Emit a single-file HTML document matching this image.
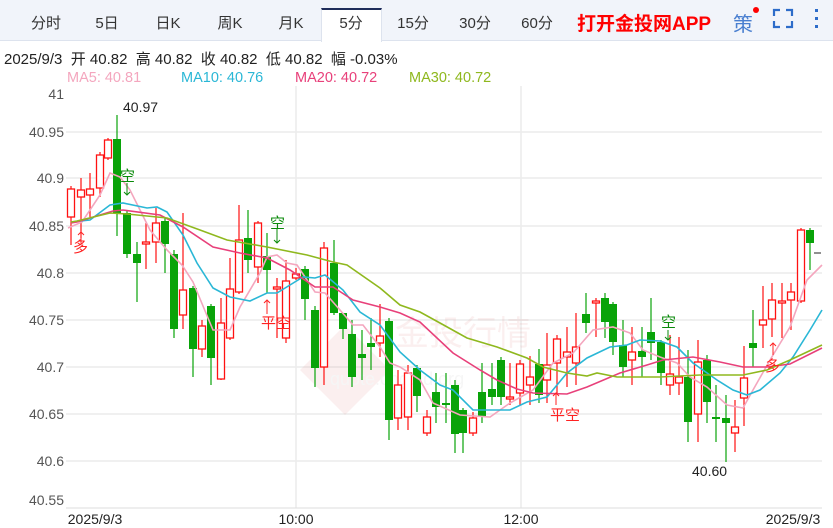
<!DOCTYPE html>
<html><head><meta charset="utf-8"><style>
*{margin:0;padding:0;box-sizing:border-box}
body{width:833px;height:528px;background:#fff;font-family:"Liberation Sans","Noto Sans CJK SC",sans-serif;position:relative;overflow:hidden}
.bar{position:absolute;left:0;top:0;width:833px;height:41px;background:#f1f4fa;border-bottom:1px solid #dde3ee}
.tab{position:absolute;top:12px;font-size:15px;color:#333;transform:translateX(-50%)}
.act{position:absolute;left:321px;top:8px;width:61px;height:34px;background:#fff;border-top:2px solid #1f2d5a;border-left:1px solid #dde3ee;border-right:1px solid #dde3ee}
.app{position:absolute;left:577px;top:9px;font-size:19px;font-weight:bold;color:#f00}
.info{position:absolute;left:4px;top:48px;font-size:15px;color:#222;white-space:pre}
svg{position:absolute;left:0;top:0}
</style></head><body>
<div class="bar"></div><div class="act"></div>
<span class="tab" style="left:46px">分时</span><span class="tab" style="left:107px">5日</span><span class="tab" style="left:168px">日K</span><span class="tab" style="left:230px">周K</span><span class="tab" style="left:291px">月K</span><span class="tab" style="left:351px">5分</span><span class="tab" style="left:413px">15分</span><span class="tab" style="left:475px">30分</span><span class="tab" style="left:537px">60分</span>
<span class="app">打开金投网APP</span>
<span style="position:absolute;left:733px;top:8px;font-size:20px;color:#4a7fd0">策</span>
<span style="position:absolute;left:753px;top:7px;width:6px;height:6px;border-radius:3px;background:#f00"></span>
<div class="info">2025/9/3  开 40.82  高 40.82  收 40.82  低 40.82  幅 -0.03%</div>
<svg width="833" height="528" id="s">
<g fill="none" stroke="#2d6cc9" stroke-width="2.2"><path d="M774 16v-6h6M786 10h6v6M792 21v6h-6M780 27h-6v-6"/></g>
<g fill="#2d6cc9"><rect x="815" y="9" width="3" height="3"/><rect x="815" y="17" width="3" height="3"/><rect x="815" y="25" width="3" height="3"/></g>
<text x="67" y="82" font-size="14.5" fill="#f4a6be">MA5: 40.81</text>
<text x="181" y="82" font-size="14.5" fill="#2ab7d6">MA10: 40.76</text>
<text x="295" y="82" font-size="14.5" fill="#e8407a">MA20: 40.72</text>
<text x="409" y="82" font-size="14.5" fill="#8fb81e">MA30: 40.72</text>
<g stroke="#ececec" stroke-width="1.5" id="grid"></g>
<g font-size="14" fill="#555" text-anchor="end" id="yl"></g>
<g opacity="0.07"><path d="M300 370l45-45 45 45-45 45z" fill="#c33"/><text x="395" y="345" font-size="34" fill="#c33">金投行情</text><text x="330" y="385" font-size="18" fill="#888">quote.cngold.org</text></g>
<g id="c"></g>
<g fill="none" stroke-width="1.6" id="ma"></g>
<g font-size="14" fill="#222"><text x="123" y="112">40.97</text><text x="692" y="476">40.60</text></g>
<g font-size="15" fill="#0a8a0a"><text x="120" y="181">空</text><text x="270" y="228">空</text><text x="661" y="327">空</text></g>
<g stroke="#0a8a0a" stroke-width="1" fill="none"><path d="M127 183v12M124 192l3 3 3-3M277 229v14M274 240l3 3 3-3M668 330v10M665 337l3 3 3-3"/></g>
<g font-size="15" fill="#f22"><text x="73" y="252">多</text><text x="765" y="371">多</text><text x="261" y="328">平空</text><text x="550" y="420">平空</text></g>
<g stroke="#f22" stroke-width="1" fill="none"><path d="M81 232v12M78 235l3-3 3 3M267 300v14M264 303l3-3 3 3M556 393v12M553 396l3-3 3 3M773 343v12M770 346l3-3 3 3"/></g>
<line x1="66" y1="508" x2="822" y2="508" stroke="#ddd"/>
<g font-size="14" fill="#222" text-anchor="middle"><text x="95" y="524">2025/9/3</text><text x="296" y="524">10:00</text><text x="521" y="524">12:00</text><text x="793" y="524">2025/9/3</text></g>
<line x1="814" y1="253" x2="821" y2="253" stroke="#222"/>
</svg>
<script>
var ns="http://www.w3.org/2000/svg";
function el(p,t,a){var e=document.createElementNS(ns,t);for(var k in a)e.setAttribute(k,a[k]);document.getElementById(p).appendChild(e);return e;}
var gl=[[132,"40.95"],[178,"40.9"],[226,"40.85"],[273,"40.8"],[320,"40.75"],[367,"40.7"],[414,"40.65"],[461,"40.6"]];
gl.forEach(function(g){el("grid","line",{x1:66,x2:822,y1:g[0],y2:g[0]});var t=el("yl","text",{x:64,y:g[0]+5});t.textContent=g[1];});
el("grid","line",{x1:296,x2:296,y1:86,y2:508});el("grid","line",{x1:521,x2:521,y1:86,y2:508});
var t=el("yl","text",{x:64,y:99});t.textContent="41";t=el("yl","text",{x:64,y:505});t.textContent="40.55";
var C=[[71,189,217,186,245,1],[81,190,197,178,238,1],[90,189,195,173,217,1],[100,155,188,152,197,1],[108,140,158,138,160,1],[117,139,213,115,236,0],[127,213,254,210,258,0],[137,254,263,242,302,0],[146,242,244,223,269,1],[156,223,242,208,263,1],[165,221,244,218,273,0],[174,254,329,250,338,0],[183,290,315,213,329,1],[193,288,349,286,377,0],[202,326,349,320,357,1],[211,306,358,304,385,0],[221,323,379,298,380,1],[230,289,338,258,340,1],[239,240,292,205,294,1],[248,238,260,210,273,0],[258,223,267,221,283,1],[267,256,270,233,293,0],[277,287,289,278,338,1],[286,281,338,260,343,1],[296,274,278,268,280,1],[305,269,299,266,320,0],[315,310,368,306,387,0],[324,248,367,242,385,1],[334,263,313,240,315,0],[343,313,329,318,339,0],[352,334,377,320,387,0],[362,354,358,330,380,0],[371,343,347,318,370,0],[380,336,343,304,357,1],[389,321,420,318,440,0],[398,385,418,370,430,1],[408,373,417,365,430,1],[417,368,396,365,412,0],[427,417,433,410,436,1],[436,392,407,373,423,0],[446,403,405,373,423,0],[455,385,434,380,453,0],[463,410,433,408,453,0],[473,418,433,412,436,1],[482,392,416,363,423,0],[492,389,397,363,405,0],[501,360,397,357,405,0],[510,397,399,363,405,1],[520,364,393,360,405,1],[530,377,385,356,405,1],[539,364,395,349,403,0],[547,365,380,333,403,1],[557,339,363,335,393,1],[567,352,357,327,387,1],[576,347,363,313,385,1],[586,314,323,293,333,0],[596,301,303,298,337,1],[605,298,322,293,338,0],[613,304,342,302,355,0],[623,345,367,320,377,0],[632,352,360,327,385,1],[642,351,357,327,377,0],[651,332,343,298,360,0],[661,342,373,340,385,0],[670,374,385,335,395,1],[679,377,383,337,395,1],[688,377,422,350,442,0],[698,362,414,340,442,1],[707,360,402,355,423,0],[716,417,419,385,442,0],[726,418,423,395,462,0],[735,427,433,400,452,1],[744,378,398,346,426,1],[753,343,348,310,367,0],[763,320,325,286,348,1],[772,300,319,283,337,1],[782,301,303,283,338,1],[791,292,300,283,330,1],[801,230,301,228,303,1],[810,230,243,228,270,0]];
C.forEach(function(c){var col=c[5]?"#f11":"#09a309";el("c","line",{x1:c[0],x2:c[0],y1:c[3],y2:c[4],stroke:col,"stroke-width":1.2});
var h=Math.max(c[2]-c[1],2);if(c[5])el("c","rect",{x:c[0]-3.5,y:c[1],width:7,height:h,fill:"#fff",stroke:col,"stroke-width":1.3});else el("c","rect",{x:c[0]-4,y:c[1],width:8,height:h,fill:col});});
var M={"#f4a6be":"68,228 82,222 100,195 110,173 120,177 130,190 140,210 150,230 167,250 182,265 193,282 213,330 230,330 240,307 260,273 267,257 277,255 287,263 297,265 315,292 325,293 340,310 353,325 363,325 380,347 390,363 400,367 420,380 433,403 460,415 490,417 510,403 533,390 553,363 573,353 593,330 613,327 630,333 643,350 660,357 677,363 690,377 707,387 727,405 743,408 753,390 770,360 790,327 807,280 822,265",
"#2ab7d6":"71,222 90,220 110,205 123,203 147,208 157,207 167,212 183,235 197,263 213,288 230,297 250,301 267,293 277,293 290,285 303,277 315,278 325,275 343,290 360,312 380,325 400,352 420,370 440,385 453,390 473,410 487,410 510,410 527,402 547,397 567,373 587,358 610,347 627,345 640,340 660,341 677,347 693,363 717,380 733,390 747,395 760,390 780,373 793,357 810,330 822,310",
"#e8407a":"71,223 77,222 113,211 123,210 160,215 183,227 213,247 240,253 267,258 290,270 315,287 333,287 353,300 380,307 400,313 420,322 453,353 480,370 497,380 517,389 533,393 567,394 587,387 620,373 647,365 663,360 693,357 720,362 743,367 767,367 790,364 822,348",
"#8fb81e":"71,222 77,221 110,213 127,214 167,218 200,230 227,240 267,247 307,255 333,262 347,265 380,288 400,305 420,312 440,323 467,338 497,347 527,358 543,367 567,373 587,376 597,373 617,377 660,377 700,375 743,375 767,370 790,360 822,345"};
for(var k in M)el("ma","polyline",{points:M[k],stroke:k});
</script>
</body></html>
